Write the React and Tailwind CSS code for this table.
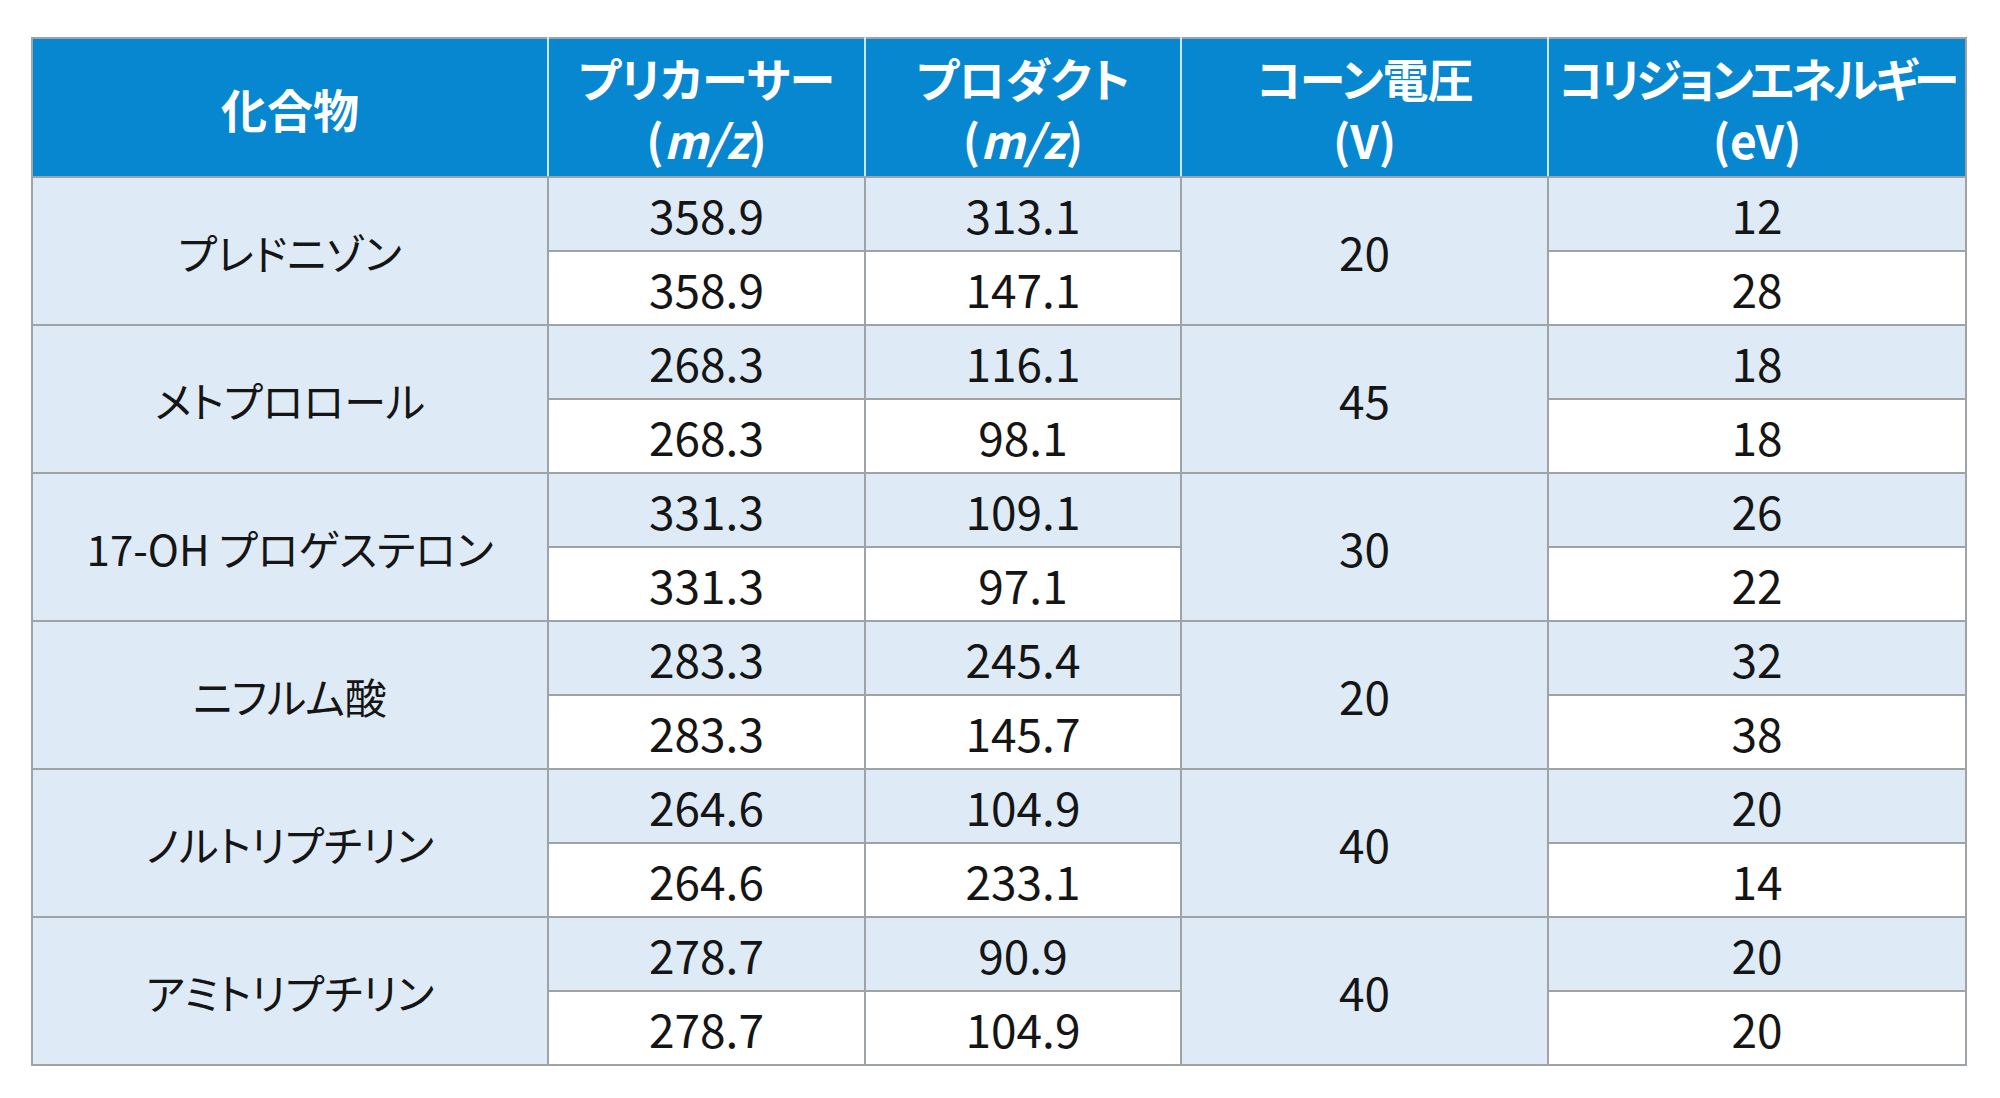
import React from "react";

const rows = [
  { name: "プレドニゾン", cone: "20", sub: [["358.9", "313.1", "12"], ["358.9", "147.1", "28"]] },
  { name: "メトプロロール", cone: "45", sub: [["268.3", "116.1", "18"], ["268.3", "98.1", "18"]] },
  { name: "17-OH プロゲステロン", cone: "30", sub: [["331.3", "109.1", "26"], ["331.3", "97.1", "22"]] },
  { name: "ニフルム酸", cone: "20", sub: [["283.3", "245.4", "32"], ["283.3", "145.7", "38"]] },
  { name: "ノルトリプチリン", cone: "40", sub: [["264.6", "104.9", "20"], ["264.6", "233.1", "14"]] },
  { name: "アミトリプチリン", cone: "40", sub: [["278.7", "90.9", "20"], ["278.7", "104.9", "20"]] },
];

const th =
  "bg-[#0787d0] text-white font-bold text-[46px] leading-[62px] text-center align-middle whitespace-nowrap p-0 border-y-2 border-y-[#9ea3a8] border-x-2 border-x-[#cde5f5]";
const td = "border-2 border-[#9ea3a8] text-center align-middle p-0 h-[74px] text-[46px] text-[#151515]";

export default function App() {
  return (
    <div
      className="w-[2000px] h-[1098px] bg-white pt-[37px] pl-[31px] [font-feature-settings:'palt']"
      style={{ fontFamily: '"Noto Sans CJK JP", "Noto Sans", sans-serif' }}
    >
      <table className="border-collapse table-fixed w-[1934px]">
        <colgroup>
          <col className="w-[516px]" />
          <col className="w-[317px]" />
          <col className="w-[316px]" />
          <col className="w-[367px]" />
          <col className="w-[418px]" />
        </colgroup>
        <thead>
          <tr className="h-[139px]">
            <th className={th + " !border-l-[#9ea3a8]"}>化合物</th>
            <th className={th}>
              プリカーサー
              <br />(<i className="italic">m/z</i>)
            </th>
            <th className={th}>
              プロダクト
              <br />(<i className="italic">m/z</i>)
            </th>
            <th className={th}>
              <span className="tracking-[-1px]">コーン電圧</span>
              <br />(V)
            </th>
            <th className={th + " !border-r-[#9ea3a8]"}>
              <span className="tracking-[-3.4px]">コリジョンエネルギー</span>
              <br />(eV)
            </th>
          </tr>
        </thead>
        <tbody>
          {rows.map((r) => (
            <React.Fragment key={r.name}>
              <tr>
                <td rowSpan={2} className={td + " bg-[#deebf7] !text-[42px] whitespace-nowrap"}>
                  {r.name}
                </td>
                <td className={td + " bg-[#deebf7]"}>{r.sub[0][0]}</td>
                <td className={td + " bg-[#deebf7]"}>{r.sub[0][1]}</td>
                <td rowSpan={2} className={td + " bg-[#deebf7]"}>
                  {r.cone}
                </td>
                <td className={td + " bg-[#deebf7]"}>{r.sub[0][2]}</td>
              </tr>
              <tr>
                <td className={td + " bg-white"}>{r.sub[1][0]}</td>
                <td className={td + " bg-white"}>{r.sub[1][1]}</td>
                <td className={td + " bg-white"}>{r.sub[1][2]}</td>
              </tr>
            </React.Fragment>
          ))}
        </tbody>
      </table>
    </div>
  );
}
